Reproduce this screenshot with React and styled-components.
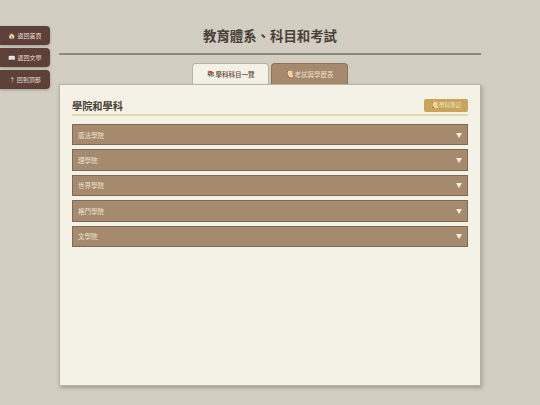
import React from 'react'
import styled, { createGlobalStyle } from 'styled-components'

const FONT = `"Noto Sans CJK TC", "Noto Sans", sans-serif`

const GlobalStyle = createGlobalStyle`
  html, body {
    margin: 0;
    padding: 0;
    height: 100%;
    background: #d2cec2;
    font-family: ${FONT};
    overflow: hidden;
  }
`

const Page = styled.div`
  width: 540px;
  height: 405px;
  box-sizing: border-box;
  padding: 0 59px 19px;
  display: flex;
  flex-direction: column;
`

const SideNav = styled.nav`
  position: absolute;
  left: 0;
  top: 26px;
  display: flex;
  flex-direction: column;
  gap: 3px;
`

const SideButton = styled.a`
  width: 50px;
  height: 19px;
  display: flex;
  align-items: center;
  justify-content: center;
  gap: 2px;
  background: #5d4037;
  color: #e8dfd0;
  font-size: 6px;
  border-radius: 0 4px 4px 0;
  box-shadow: 0 1px 3px rgba(0, 0, 0, 0.25);
`

const Header = styled.header`
  height: 55px;
  box-sizing: border-box;
  border-bottom: 2px solid #8f897c;
  padding-top: 25px;
  text-align: center;
`

const Title = styled.h1`
  margin: 0;
  font-size: 13.4px;
  line-height: 20px;
  font-weight: 700;
  color: #4a4238;
`

const Tabs = styled.div`
  display: flex;
  justify-content: center;
  gap: 2px;
  margin-top: 8px;
  height: 21px;
`

const Tab = styled.div`
  width: ${p => p.$width}px;
  box-sizing: border-box;
  display: flex;
  align-items: center;
  justify-content: center;
  gap: 2px;
  font-size: 6.5px;
  font-weight: ${p => (p.$active ? 500 : 400)};
  color: ${p => (p.$active ? '#5d4037' : '#eadfcb')};
  background: ${p => (p.$active ? '#f4f1e6' : '#a68a6d')};
  border: 1px solid ${p => (p.$active ? '#b8b2a4' : '#8c745b')};
  border-bottom: none;
  border-radius: 4px 4px 0 0;
`

const Panel = styled.main`
  flex: 1;
  background: #f4f1e6;
  border: 1px solid #b8b4a6;
  box-shadow: 1px 2px 4px rgba(0, 0, 0, 0.25);
  padding: 12px 12px;
  display: flex;
  flex-direction: column;
`

const PanelHead = styled.div`
  display: flex;
  align-items: center;
  justify-content: space-between;
  height: 16px;
  padding-bottom: 1px;
  border-bottom: 2px solid #e8d5ac;
  margin-bottom: 8px;
`

const PanelTitle = styled.h2`
  margin: 0;
  font-size: 10.2px;
  font-weight: 700;
  color: #4a4238;
`

const NoteButton = styled.div`
  width: 44px;
  height: 13px;
  display: flex;
  align-items: center;
  justify-content: center;
  gap: 1px;
  background: #c9a55c;
  color: #f2e8cf;
  border-radius: 2px;
  font-size: 5.5px;
`

const Accordion = styled.div`
  display: flex;
  flex-direction: column;
  gap: 4px;
`

const Row = styled.div`
  height: 21.4px;
  box-sizing: border-box;
  display: flex;
  align-items: center;
  justify-content: space-between;
  padding: 0 5px;
  background: #a68a6d;
  border: 1px solid #7d6b58;
  color: #ebe3d3;
  font-size: 6.5px;
`

const Arrow = styled.span`
  color: #f4f1e6;
  font-size: 6px;
  margin-top: -1px;
`

const Glyph = styled.span`
  font-size: ${p => p.$size || 6}px;
  line-height: 1;
`

const schools = ['魔法學院', '理學院', '世界學院', '格鬥學院', '文學院']

export default function App() {
  return (
    <Page>
      <GlobalStyle />
      <SideNav>
        <SideButton><Glyph>🏠</Glyph>返回首頁</SideButton>
        <SideButton><Glyph>📖</Glyph>返回文學</SideButton>
        <SideButton>↑ 回到頂部</SideButton>
      </SideNav>
      <Header>
        <Title>教育體系、科目和考試</Title>
      </Header>
      <Tabs>
        <Tab $active $width={77}><Glyph>📚</Glyph>學科科目一覽</Tab>
        <Tab $width={77}><Glyph>📜</Glyph>考試與學歷表</Tab>
      </Tabs>
      <Panel>
        <PanelHead>
          <PanelTitle>學院和學科</PanelTitle>
          <NoteButton><Glyph>📜</Glyph>學科筆記</NoteButton>
        </PanelHead>
        <Accordion>
          {schools.map(name => (
            <Row key={name}>
              {name}
              <Arrow>▼</Arrow>
            </Row>
          ))}
        </Accordion>
      </Panel>
    </Page>
  )
}
